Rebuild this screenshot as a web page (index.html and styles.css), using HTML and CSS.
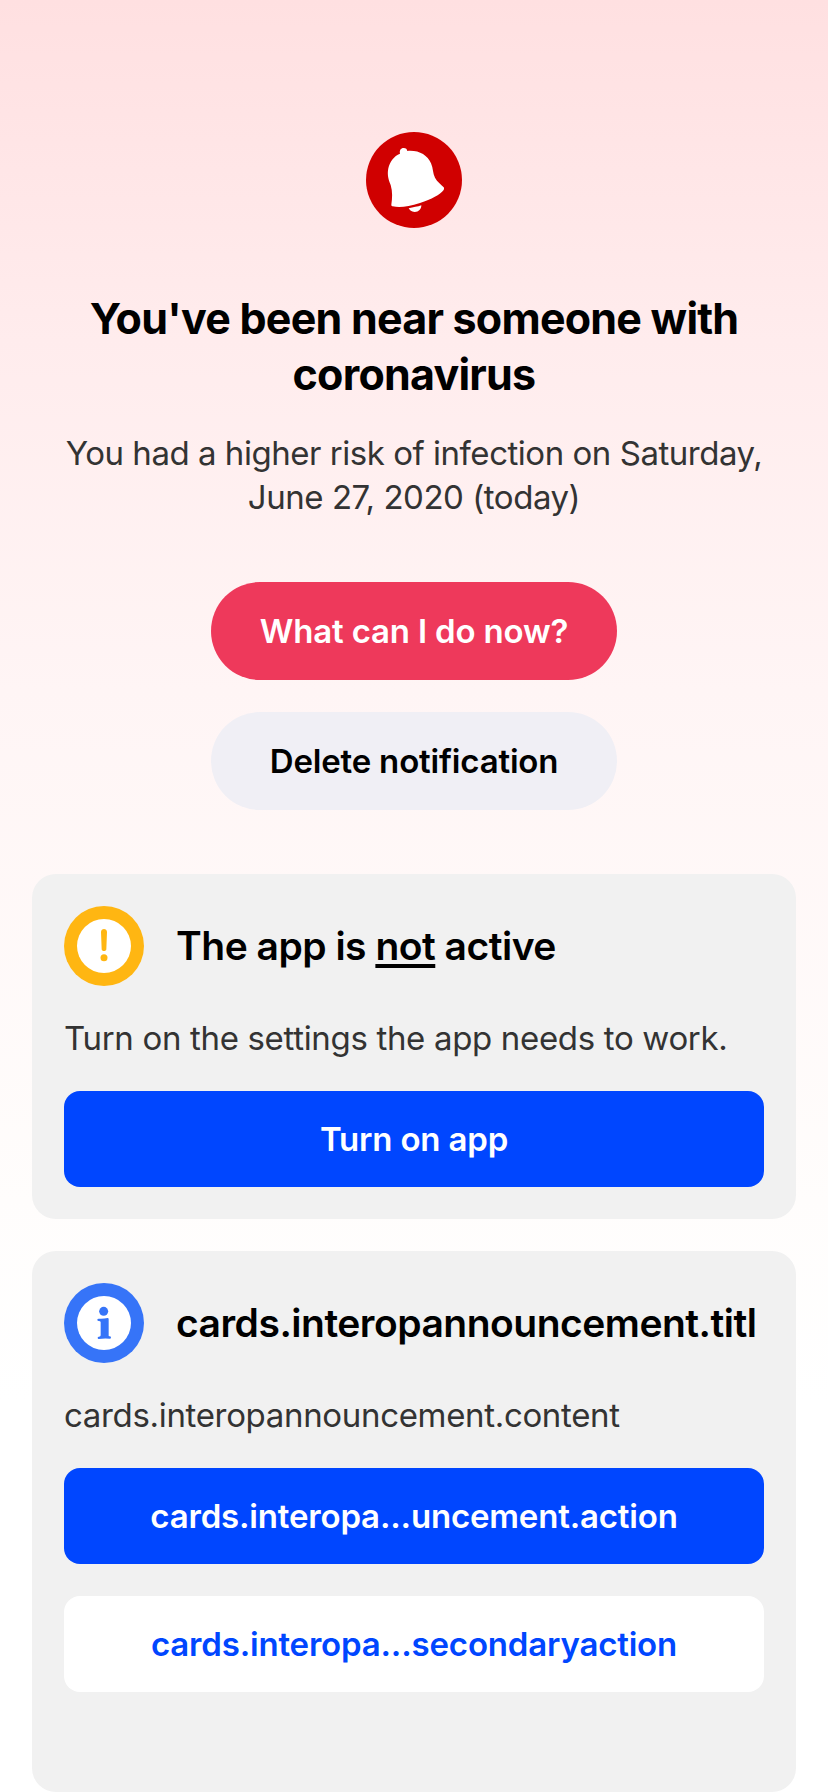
FILE: index.html
```html
<!DOCTYPE html>
<html lang="en">
<head>
<meta charset="utf-8">
<title>Exposure notification</title>
<link rel="stylesheet" href="styles.css">
</head>
<body>
<main class="screen">
  <section class="hero">
    <svg class="bell" viewBox="48 36 288 288" aria-hidden="true">
      <circle cx="192" cy="180" r="144" fill="#d00000"/>
      <path fill="#fff" d="M124 254C127 235 128 215 122 195C113 175 112 160 115 145C119 125 132 108 150 101C148 91 152 84 161 84C168 84 171 87 172 93C206 90 232 105 243 130C250 145 248 160 255 173C262 186 273 193 281 202C283 204 282 208 281 210C270 224 245 238 210 249C175 260 150 263 128 259C125 258 124 257 124 254Z"/>
      <path fill="#fff" d="M176 265C190 262 203 260 214 256C214 268 206 276 194 276C184 276 179 270 176 265Z"/>
    </svg>
    <h1 class="heading">You've been near someone with<br>coronavirus</h1>
    <p class="lead">You had a higher risk of infection on Saturday,<br>June 27, 2020 (today)</p>
    <div class="actions">
      <button class="pill pill-primary">What can I do now?</button>
      <button class="pill pill-secondary">Delete notification</button>
    </div>
  </section>

  <section class="card">
    <header class="card-head">
      <svg class="card-icon" viewBox="0 0 240 240" aria-hidden="true">
        <circle cx="120" cy="120" r="120" fill="#ffb612"/>
        <circle cx="120" cy="120" r="81" fill="#fff"/>
        <path fill="#ffb612" d="M111 78C111 66 129 66 129 78L127 130C127 137 113 137 113 130Z"/>
        <circle cx="120" cy="155" r="10.5" fill="#ffb612"/>
      </svg>
      <h2 class="card-title">The app is <span class="underlined">not</span> active</h2>
    </header>
    <p class="card-text">Turn on the settings the app needs to work.</p>
    <button class="btn btn-primary">Turn on app</button>
  </section>

  <section class="card card-last">
    <header class="card-head">
      <svg class="card-icon" viewBox="0 0 240 240" aria-hidden="true">
        <circle cx="120" cy="120" r="120" fill="#3674f8"/>
        <circle cx="120" cy="120" r="81" fill="#fff"/>
        <circle cx="119" cy="85" r="13.5" fill="#3674f8"/>
        <path fill="#3674f8" d="M104 107Q118 108 131 105Q134 105 134 109V158Q134 160 138 160Q141 161 141 164Q141 167 137 167Q121 165 104 168Q101 168 101 164Q101 161 105 161Q110 161 110 157V118Q110 114 104 114Q100 114 100 110Q100 107 104 107Z"/>
      </svg>
      <h2 class="card-title">cards.interopannouncement.titl</h2>
    </header>
    <p class="card-text">cards.interopannouncement.content</p>
    <button class="btn btn-primary">cards.interopa...uncement.action</button>
    <button class="btn btn-secondary">cards.interopa...secondaryaction</button>
  </section>
</main>
</body>
</html>
```
FILE: styles.css
```css
* {
  box-sizing: border-box;
}

body {
  margin: 0;
  font-family: Inter, "Liberation Sans", sans-serif;
  color: #000;
}

h1, h2, p {
  margin: 0;
}

.screen {
  height: 1792px;
  padding: 132px 32px 0;
  display: flex;
  flex-direction: column;
  gap: 32px;
  background: linear-gradient(#ffe0e1, #ffeced 340px, #fff5f5 690px, #fffdfc 1200px, #fff 1400px);
  overflow: hidden;
}

.hero {
  display: flex;
  flex-direction: column;
  align-items: center;
  padding-bottom: 32px;
  text-align: center;
  white-space: nowrap;
}

.bell {
  width: 96px;
  height: 96px;
  display: block;
}

.heading {
  margin-top: 62px;
  font-size: 43px;
  line-height: 56px;
  font-weight: 700;
  letter-spacing: -0.77px;
}

.lead {
  margin-top: 29px;
  font-size: 33px;
  line-height: 44px;
  letter-spacing: -0.47px;
  color: #333;
}

.actions {
  margin-top: 63px;
  display: flex;
  flex-direction: column;
  gap: 32px;
}

.pill, .btn {
  border: 0;
  padding: 0;
  font-family: inherit;
  font-size: 33px;
  font-weight: 600;
  letter-spacing: -0.18px;
}

.pill {
  width: 406px;
  height: 98px;
  border-radius: 49px;
}

.pill-primary {
  background: #ee395b;
  color: #fff;
}

.pill-secondary {
  background: #f0eff5;
  color: #000;
}

.card {
  padding: 32px;
  border-radius: 24px;
  background: #f1f1f1;
  display: flex;
  flex-direction: column;
  white-space: nowrap;
}

.card-last {
  padding-bottom: 100px;
}

.card-head {
  display: flex;
  align-items: center;
  gap: 32px;
}

.card-icon {
  width: 80px;
  height: 80px;
  flex: none;
}

.card-title {
  font-size: 39px;
  line-height: 48px;
  font-weight: 600;
  letter-spacing: -0.5px;
}

.underlined {
  text-decoration: underline;
  text-decoration-thickness: 4px;
  text-underline-offset: 4px;
  text-decoration-skip-ink: none;
}

.card-text {
  margin-top: 30px;
  font-size: 33px;
  line-height: 44px;
  letter-spacing: -0.33px;
  color: #333;
}

.btn {
  height: 96px;
  margin-top: 31px;
  border-radius: 16px;
}

.btn-primary {
  background: #0046ff;
  color: #fff;
}

.btn-secondary {
  margin-top: 32px;
  background: #fff;
  color: #0046ff;
}
```
